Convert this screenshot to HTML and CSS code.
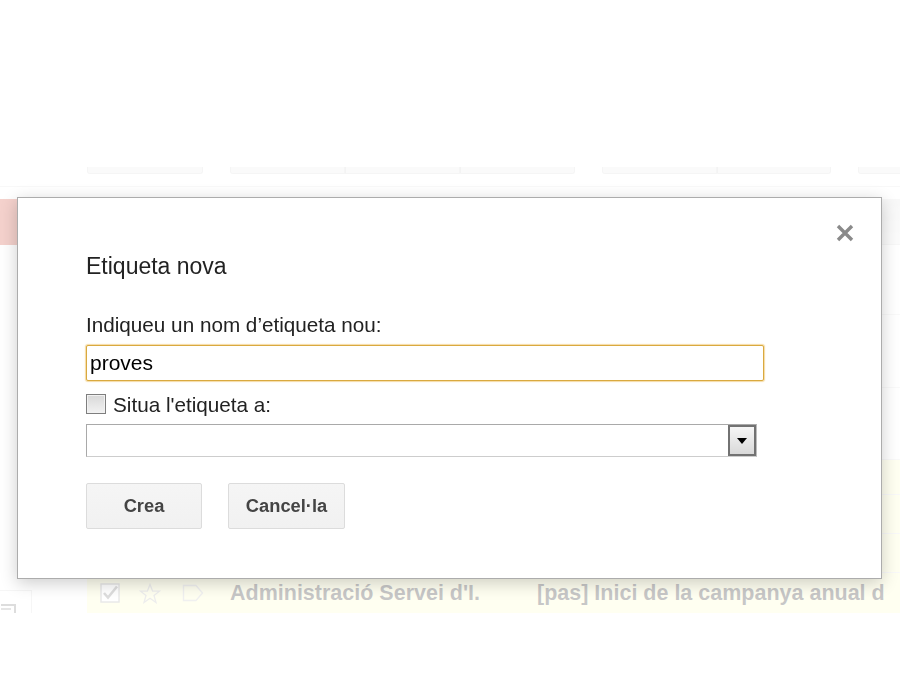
FILE: index.html
```html
<!DOCTYPE html>
<html lang="ca">
<head>
<meta charset="utf-8">
<title>Etiqueta nova</title>
<link rel="stylesheet" href="styles.css">
</head>
<body>
<div class="app">
  <div class="masthead"></div>
  <div class="toolbar">
    <div class="tb-group g1"><span class="tb-btn"></span></div>
    <div class="tb-group g2"><span class="tb-btn"></span><span class="tb-btn"></span><span class="tb-btn"></span></div>
    <div class="tb-group g3"><span class="tb-btn"></span><span class="tb-btn"></span></div>
    <div class="tb-group g4"><span class="tb-btn"></span></div>
  </div>
  <div class="main">
    <aside class="sidebar">
      <div class="compose"></div>
      <div class="side-tool">
        <svg width="18" height="10" viewBox="0 0 18 10"><path d="M1 2 H15 V10" fill="none" stroke="#777" stroke-width="2"/><path d="M1 6 H11" fill="none" stroke="#999" stroke-width="2"/></svg>
      </div>
    </aside>
    <section class="list">
      <div class="list-head"></div>
      <div class="row r70"></div>
      <div class="row r73"></div>
      <div class="row r72"></div>
      <div class="row unread r35"></div>
      <div class="row unread r39"></div>
      <div class="row unread r39"></div>
      <div class="row unread r40 mail">
        <svg class="ic" width="20" height="20" viewBox="0 0 20 20"><rect x="1" y="1" width="18" height="18" fill="#fff" stroke="#a8a8a8" stroke-width="1.5"/><path d="M4 10 L8 14.5 L17 3.5" fill="none" stroke="#7a7a7a" stroke-width="2.6"/></svg>
        <svg class="ic star" width="22" height="21" viewBox="0 0 22 21"><path d="M11 1.5 L13.6 8 L20.5 8.2 L15 12.5 L17 19.5 L11 15.3 L5 19.5 L7 12.5 L1.5 8.2 L8.4 8 Z" fill="none" stroke="#b8b8b8" stroke-width="1.3"/></svg>
        <svg class="ic tag" width="22" height="18" viewBox="0 0 22 18"><path d="M1.5 1.5 H14 L20.5 9 L14 16.5 H1.5 Z" fill="none" stroke="#c4c4c4" stroke-width="1.4"/></svg>
        <span class="sender">Administració Servei d'I.</span>
        <span class="subject">[pas] Inici de la campanya anual d</span>
      </div>
    </section>
  </div>
</div>

<div class="scrim"></div>

<div class="dialog" role="dialog" aria-labelledby="dlg-title">
  <button class="close" type="button" aria-label="Tanca">
    <svg width="18" height="18" viewBox="0 0 18 18"><path d="M2 2 L16 16 M16 2 L2 16" stroke="#8a8a8a" stroke-width="3.4" stroke-linecap="butt"/></svg>
  </button>
  <h2 class="title" id="dlg-title">Etiqueta nova</h2>
  <label class="field-label" for="name">Indiqueu un nom d’etiqueta nou:</label>
  <input class="text-input" id="name" type="text" value="proves">
  <label class="check-row">
    <span class="checkbox"></span>
    <span>Situa l'etiqueta a:</span>
  </label>
  <div class="select">
    <span class="select-value"></span>
    <span class="select-btn"><span class="tri"></span></span>
  </div>
  <div class="actions">
    <button class="btn crea" type="button">Crea</button>
    <button class="btn cancel" type="button">Cancel·la</button>
  </div>
</div>
</body>
</html>
```

FILE: styles.css
```css
* { box-sizing: border-box; }

html, body {
  margin: 0;
  padding: 0;
  width: 900px;
  height: 700px;
  overflow: hidden;
  background: #fff;
  font-family: "Liberation Sans", Arial, sans-serif;
  color: #222;
}

/* ---------- background app ---------- */
.app {
  width: 900px;
}

.masthead {
  height: 167px;
}

.toolbar {
  height: 20px;
  display: flex;
  gap: 27px;
  padding-left: 87px;
  border-bottom: 1px solid #e2e2e2;
  overflow: hidden;
}

.tb-group {
  display: flex;
  flex: none;
  height: 7px;
}
.g1 { width: 116px; }
.g2 { width: 345px; }
.g3 { width: 229px; }
.g4 { width: 120px; }

.tb-btn {
  flex: 1;
  height: 7px;
  background: #ececec;
  border: 1px solid #d6d6d6;
  border-top: none;
}
.tb-btn + .tb-btn { border-left-color: #cfcfcf; }
.tb-group .tb-btn:first-child { border-bottom-left-radius: 3px; }
.tb-group .tb-btn:last-child { border-bottom-right-radius: 3px; }

.main {
  display: flex;
  padding-top: 12px;
}

.sidebar {
  width: 87px;
  flex: none;
  display: flex;
  flex-direction: column;
}

.compose {
  width: 74px;
  height: 46px;
  background: #d14836;
  border-radius: 0 3px 3px 0;
}

.side-tool {
  margin-top: 345px;
  width: 32px;
  height: 23px;
  border: 1px solid #dadada;
  border-left: none;
  border-bottom: none;
  display: flex;
  align-items: flex-end;
}

.list {
  flex: 1;
  display: flex;
  flex-direction: column;
}

.list-head {
  height: 46px;
  background: linear-gradient(#e2e2e2, #f0f0f0);
  border-bottom: 1px solid #e0e0e0;
}

.row {
  border-bottom: 1px solid #e6e6e6;
  background: #fff;
}
.row.unread { background: #ffffc8; }
.r70 { height: 70px; }
.r73 { height: 73px; }
.r72 { height: 72px; }
.r35 { height: 35px; }
.r39 { height: 39px; }
.r40 { height: 40px; border-bottom: none; }

.mail {
  display: flex;
  align-items: center;
  padding-left: 13px;
  font-size: 21.5px;
  font-weight: bold;
  white-space: nowrap;
}

.ic { flex: none; }
.star { margin-left: 19px; }
.tag { margin-left: 21px; }

.sender {
  margin-left: 26px;
  width: 307px;
  flex: none;
}

.subject {
  flex: none;
}

/* dims everything behind the dialog */
.scrim {
  position: fixed;
  inset: 0;
  background: rgba(255, 255, 255, 0.75);
}

/* ---------- dialog ---------- */
.dialog {
  position: absolute;
  left: 17px;
  top: 197px;
  width: 865px;
  height: 382px;
  background: #fff;
  border: 1px solid #acacac;
  box-shadow: 0 4px 16px rgba(0, 0, 0, 0.2);
  padding: 54px 0 0 68px;
}

.close {
  position: absolute;
  top: 26px;
  right: 27px;
  width: 18px;
  height: 18px;
  padding: 0;
  border: none;
  background: none;
  display: block;
}
.close svg { display: block; }

.title {
  margin: 0;
  font-size: 23px;
  line-height: 28px;
  font-weight: normal;
  color: #222;
}

.field-label {
  display: block;
  margin-top: 33px;
  font-size: 20.7px;
  line-height: 24px;
  color: #222;
}

.text-input {
  display: block;
  margin: 8px 0 0;
  width: 678px;
  height: 36px;
  padding: 0 3px;
  font-family: "Liberation Sans", Arial, sans-serif;
  font-size: 21px;
  color: #000;
  border: 1px solid #d9a93f;
  border-radius: 2px;
  box-shadow: 0 0 1px 1px rgba(236, 190, 90, 0.55);
  outline: none;
  background: #fff;
}

.check-row {
  margin-top: 12px;
  display: flex;
  align-items: flex-start;
  gap: 7px;
  height: 24px;
  font-size: 20.7px;
  line-height: 24px;
  color: #222;
}

.checkbox {
  margin-top: 1px;
  width: 20px;
  height: 20px;
  flex: none;
  border: 1px solid #7e7e7e;
  background: linear-gradient(#d8d8d8, #f2f2f2);
  box-shadow: inset 0 0 0 1px #f2f2f2;
}

.select {
  margin-top: 7px;
  width: 671px;
  height: 33px;
  display: flex;
  border: 1px solid #a9a9a9;
  border-bottom-color: #cdcdcd;
  border-right-color: #bcbcbc;
  background: #fff;
}

.select-value { flex: 1; }

.select-btn {
  width: 28px;
  height: 31px;
  border: 2px solid #727272;
  background: linear-gradient(#f6f6f6, #d9d9d9);
  display: flex;
  align-items: center;
  justify-content: center;
}

.tri {
  width: 0;
  height: 0;
  border-left: 5.5px solid transparent;
  border-right: 5.5px solid transparent;
  border-top: 6px solid #000;
  margin-top: 1px;
}

.actions {
  margin-top: 26px;
  display: flex;
  gap: 26px;
}

.btn {
  height: 46px;
  padding: 0;
  font-family: "Liberation Sans", Arial, sans-serif;
  font-size: 18.3px;
  font-weight: bold;
  color: #444;
  background: linear-gradient(#f5f5f5, #f1f1f1);
  border: 1px solid #dcdcdc;
  border-radius: 2px;
}
.crea { width: 116px; }
.cancel { width: 117px; }
```
